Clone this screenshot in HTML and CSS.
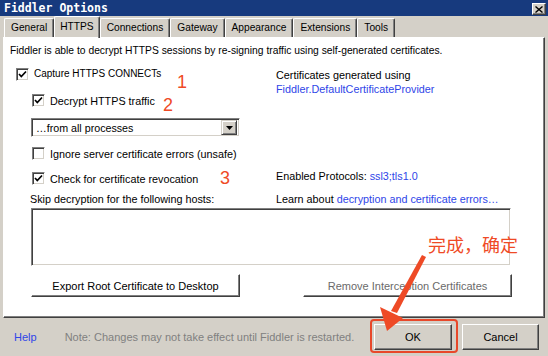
FILE: index.html
```html
<!DOCTYPE html>
<html>

<head>
    <title>Fiddler Options</title>
    <link rel="stylesheet" href="styles.css">
</head>

<body>
    <div class="window">
        <div class="titlebar">
            <span class="title">Fiddler Options</span>
            <span class="close">
                <svg width="8" height="7" viewBox="0 0 8 7"><path d="M0.5 0.5 L7.5 6.5 M7.5 0.5 L0.5 6.5" stroke="#000" stroke-width="1.4"/></svg>
            </span>
        </div>

        <div class="tabs">
            <div class="tab">General</div>
            <div class="tab activo">HTTPS</div>
            <div class="tab">Connections</div>
            <div class="tab">Gateway</div>
            <div class="tab">Appearance</div>
            <div class="tab">Extensions</div>
            <div class="tab">Tools</div>
        </div>

        <div class="panel">
            <p class="intro">Fiddler is able to decrypt HTTPS sessions by re-signing traffic using self-generated certificates.</p>

            <div class="opciones">
                <div class="fila nivel1">
                    <span class="cb"><svg width="11" height="11" viewBox="0 0 11 11"><path d="M2 5 L4.3 7.5 L9 2.5" fill="none" stroke="#000" stroke-width="1.7"/></svg></span>
                    Capture HTTPS CONNECTs
                </div>
                <div class="derecha certs">
                    <div>Certificates generated using</div>
                    <div class="enlace">Fiddler.DefaultCertificateProvider</div>
                </div>

                <div class="fila nivel2">
                    <span class="cb"><svg width="11" height="11" viewBox="0 0 11 11"><path d="M2 5 L4.3 7.5 L9 2.5" fill="none" stroke="#000" stroke-width="1.7"/></svg></span>
                    Decrypt HTTPS traffic
                </div>

                <div class="fila combo-fila">
                    <div class="combo">
                        <span>…from all processes</span>
                        <span class="flecha"><svg width="7" height="4" viewBox="0 0 7 4"><path d="M0 0 H7 L3.5 4 Z" fill="#000"/></svg></span>
                    </div>
                </div>

                <div class="fila nivel2">
                    <span class="cb"></span>
                    Ignore server certificate errors (unsafe)
                </div>

                <div class="fila nivel2">
                    <span class="cb"><svg width="11" height="11" viewBox="0 0 11 11"><path d="M2 5 L4.3 7.5 L9 2.5" fill="none" stroke="#000" stroke-width="1.7"/></svg></span>
                    Check for certificate revocation
                </div>
                <div class="derecha protocolos">Enabled Protocols: <span class="enlace">ssl3;tls1.0</span></div>

                <div class="fila skip">Skip decryption for the following hosts:</div>
                <div class="derecha aprender">Learn about <span class="enlace">decryption and certificate errors…</span></div>
            </div>

            <div class="hosts"></div>

            <div class="botones">
                <div class="boton">Export Root Certificate to Desktop</div>
                <div class="boton apagado">Remove Interception Certificates</div>
            </div>
        </div>

        <div class="footer">
            <span class="enlace">Help</span>
            <span class="nota">Note: Changes may not take effect until Fiddler is restarted.</span>
            <div class="boton ok">OK</div>
            <div class="boton cancel">Cancel</div>
        </div>

        <!-- anotaciones en rojo encima de la captura -->
        <span class="num n1">1</span>
        <span class="num n2">2</span>
        <span class="num n3">3</span>
        <span class="aviso">完成，确定</span>
        <div class="marco-ok"></div>
        <svg class="flecha-roja" width="548" height="356" viewBox="0 0 548 356">
            <polygon points="422,255 426,257 397,313 391,311" fill="#ee4a26"/>
            <polygon points="387,331 380,307 403,318" fill="#ee4a26"/>
        </svg>
    </div>
</body>

</html>
```

FILE: styles.css
```css
* {
    padding: 0;
    margin: 0;
    box-sizing: border-box;
}

body {
    background-color: #d4d0c8;
    font-family: "Liberation Sans", Arial, sans-serif;
    font-size: 10.8px;
    color: #000;
}

.window {
    width: 548px;
    height: 356px;
    background-color: #d4d0c8;
    display: flex;
    flex-direction: column;
    position: relative;
    overflow: hidden;
}

.titlebar {
    height: 16px;
    background-color: #173a7e;
    display: flex;
    align-items: center;
    justify-content: space-between;
    padding: 0 2px 0 4px;
}

.title {
    font-family: "DejaVu Sans Mono", monospace;
    font-weight: bold;
    font-size: 11.5px;
    color: white;
}

.close {
    width: 14px;
    height: 12px;
    margin-top: 2px;
    background-color: #d4d0c8;
    border: 1px solid;
    border-color: #fff #404040 #404040 #fff;
    box-shadow: inset -1px -1px #808080;
    display: flex;
    align-items: center;
    justify-content: center;
}

/* pestañas */
.tabs {
    height: 21px;
    display: flex;
    align-items: flex-end;
    padding-left: 4px;
}

.tab {
    height: 19px;
    padding: 0 6px;
    line-height: 17px;
    font-size: 10.2px;
    border: 1px solid;
    border-bottom: none;
    border-color: #fff #404040 #fff #fff;
    box-shadow: inset -1px 0 #808080;
    border-radius: 2px 2px 0 0;
}

.tab.activo {
    height: 22px;
    margin-bottom: -1px;
    line-height: 19px;
    padding: 0 5px;
    position: relative;
    z-index: 1;
}

/* panel blanco */
.panel {
    height: 281px;
    margin: 0 3px;
    background-color: white;
    border: 1px solid;
    border-color: #fff #404040 #404040 #fff;
    box-shadow: inset -1px -1px #808080;
    padding: 6px 0 0 6px;
}

.intro {
    line-height: 14px;
    font-size: 10.3px;
}

.opciones {
    margin-top: 3px;
    display: grid;
    grid-template-columns: 266px 1fr;
    grid-template-rows: 26px 27px 27px 25px 25px 16px;
}

.fila {
    grid-column: 1;
    display: flex;
    align-items: center;
    line-height: 14px;
}

.nivel1 {
    padding-left: 6px;
    font-size: 10px;
}

.nivel2 {
    padding-left: 22px;
}

.skip {
    padding-left: 20px;
}

.combo-fila {
    padding-left: 21px;
}

.cb {
    width: 13px;
    height: 13px;
    margin-right: 5px;
    background-color: white;
    border: 1px solid;
    border-color: #808080 #fff #fff #808080;
    box-shadow: inset 1px 1px #404040, inset -1px -1px #d4d0c8;
    display: flex;
    align-items: center;
    justify-content: center;
}

.derecha {
    grid-column: 2;
    line-height: 14px;
}

.certs {
    grid-row: 1 / 3;
    padding-top: 7px;
}

.protocolos {
    grid-row: 5;
    padding-top: 3px;
}

.aprender {
    grid-row: 6;
    align-self: center;
}

.enlace {
    color: #2e45e8;
}

.combo {
    width: 209px;
    height: 19px;
    border: 1px solid;
    border-color: #808080 #fff #fff #808080;
    box-shadow: inset 1px 1px #404040, inset -1px -1px #d4d0c8;
    display: flex;
    align-items: center;
    justify-content: space-between;
    padding: 0 2px 0 4px;
    font-size: 10.7px;
}

.flecha {
    width: 16px;
    height: 15px;
    background-color: #d4d0c8;
    border: 1px solid;
    border-color: #d4d0c8 #404040 #404040 #d4d0c8;
    box-shadow: inset 1px 1px #fff, inset -1px -1px #808080;
    display: flex;
    align-items: center;
    justify-content: center;
}

.hosts {
    width: 480px;
    height: 58px;
    margin: 1px 0 0 21px;
    border: 1px solid;
    border-color: #808080 #fff #fff #808080;
    box-shadow: inset 1px 1px #404040, inset -1px -1px #d4d0c8;
}

.botones {
    width: 481px;
    margin: 8px 0 0 21px;
    display: flex;
    justify-content: space-between;
}

.boton {
    width: 209px;
    height: 23px;
    border: 1px solid;
    border-color: #fff #404040 #404040 #fff;
    box-shadow: inset -1px -1px #808080;
    display: flex;
    align-items: center;
    justify-content: center;
    font-size: 11px;
}

.boton.apagado {
    color: #6a6a6a;
}

/* barra inferior */
.footer {
    flex: 1;
    display: flex;
    align-items: center;
    padding: 0 9px 0 14px;
    font-size: 11px;
}

.nota {
    color: #808080;
    margin-left: 28px;
}

.ok {
    width: 78px;
    height: 26px;
    margin-left: auto;
}

.cancel {
    width: 77px;
    height: 26px;
    margin-left: 10px;
}

/* anotaciones */
.num {
    position: absolute;
    color: #ef4a25;
    font-size: 18px;
    line-height: 18px;
}

.n1 {
    left: 177px;
    top: 73px;
}

.n2 {
    left: 163px;
    top: 96px;
}

.n3 {
    left: 220px;
    top: 169px;
}

.aviso {
    position: absolute;
    left: 428px;
    top: 234px;
    font-family: "Noto Sans CJK SC", sans-serif;
    font-size: 18px;
    line-height: 20px;
    color: #ef4a25;
}

.marco-ok {
    position: absolute;
    left: 370px;
    top: 319px;
    width: 88px;
    height: 34px;
    border: 2px solid #e8482a;
    border-radius: 4px;
}

.flecha-roja {
    position: absolute;
    left: 0;
    top: 0;
}
```
